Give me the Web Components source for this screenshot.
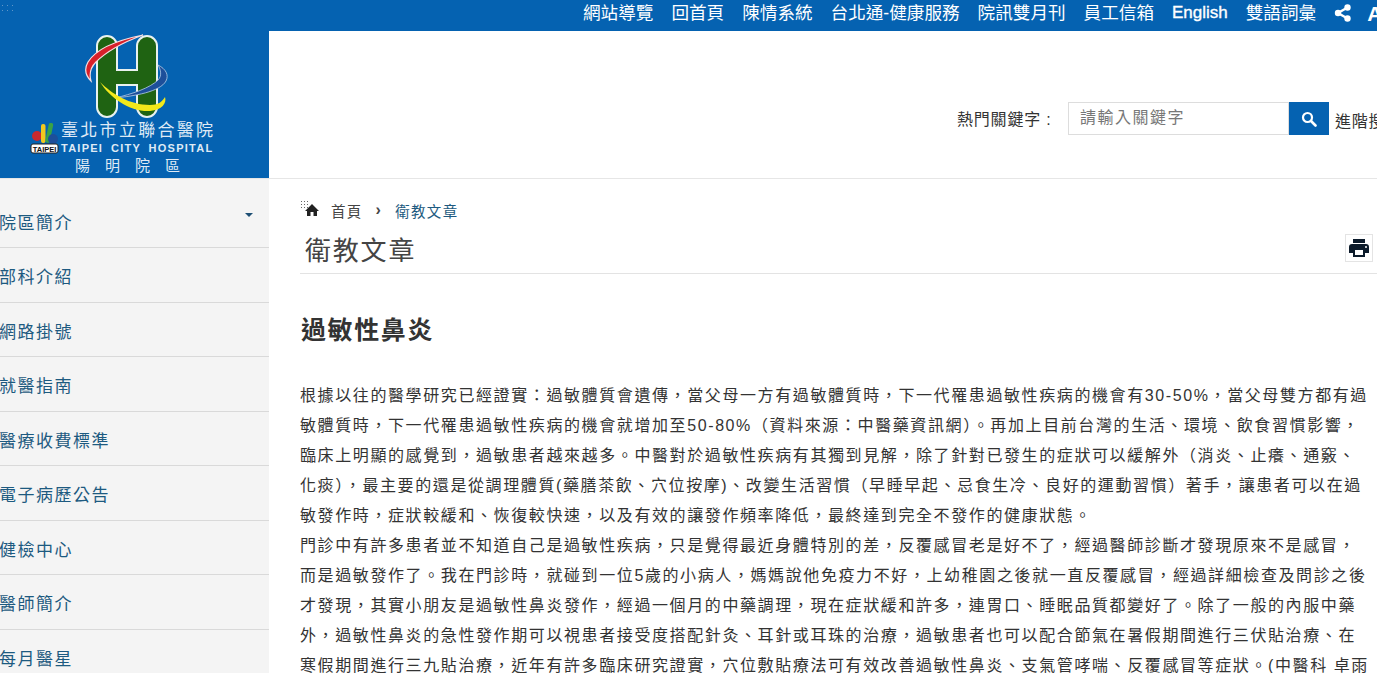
<!DOCTYPE html>
<html lang="zh-Hant">
<head>
<meta charset="utf-8">
<title>過敏性鼻炎</title>
<style>
  html, body { margin: 0; padding: 0; height: 673px; overflow: hidden; background: #fff; }
  body { font-family: "Liberation Sans", "Noto Sans CJK TC", sans-serif; color: #333; }
</style>
</head>
<body>
<page-shell>
  <top-bar slot="top">
    <a>網站導覽</a><a>回首頁</a><a>陳情系統</a><a>台北通-健康服務</a><a>院訊雙月刊</a><a>員工信箱</a><a class="en">English</a><a>雙語詞彙</a>
  </top-bar>
  <hospital-logo slot="logo"></hospital-logo>
  <search-box slot="search"></search-box>
  <side-menu slot="side">
    <menu-item open>院區簡介</menu-item>
    <menu-item>部科介紹</menu-item>
    <menu-item>網路掛號</menu-item>
    <menu-item>就醫指南</menu-item>
    <menu-item>醫療收費標準</menu-item>
    <menu-item>電子病歷公告</menu-item>
    <menu-item>健檢中心</menu-item>
    <menu-item>醫師簡介</menu-item>
    <menu-item>每月醫星</menu-item>
  </side-menu>
  <article-view slot="main" heading="衛教文章" subject="過敏性鼻炎">
    <p>根據以往的醫學研究已經證實&#xFF1A;過敏體質會遺傳&#xFF0C;當父母一方有過敏體質時&#xFF0C;下一代罹患過敏性疾病的機會有30-50%&#xFF0C;當父母雙方都有過敏體質時&#xFF0C;下一代罹患過敏性疾病的機會就增加至50-80%&#xFF08;資料來源&#xFF1A;中醫藥資訊網&#xFF09;。再加上目前台灣的生活、環境、飲食習慣影響&#xFF0C;臨床上明顯的感覺到&#xFF0C;過敏患者越來越多。中醫對於過敏性疾病有其獨到見解&#xFF0C;除了針對已發生的症狀可以緩解外&#xFF08;消炎、止癢、通竅、化痰&#xFF09;&#xFF0C;最主要的還是從調理體質(藥膳茶飲、穴位按摩)、改變生活習慣&#xFF08;早睡早起、忌食生冷、良好的運動習慣&#xFF09;著手&#xFF0C;讓患者可以在過敏發作時&#xFF0C;症狀較緩和、恢復較快速&#xFF0C;以及有效的讓發作頻率降低&#xFF0C;最終達到完全不發作的健康狀態。</p>
    <p>門診中有許多患者並不知道自己是過敏性疾病&#xFF0C;只是覺得最近身體特別的差&#xFF0C;反覆感冒老是好不了&#xFF0C;經過醫師診斷才發現原來不是感冒&#xFF0C;而是過敏發作了。我在門診時&#xFF0C;就碰到一位5歲的小病人&#xFF0C;媽媽說他免疫力不好&#xFF0C;上幼稚園之後就一直反覆感冒&#xFF0C;經過詳細檢查及問診之後才發現&#xFF0C;其實小朋友是過敏性鼻炎發作&#xFF0C;經過一個月的中藥調理&#xFF0C;現在症狀緩和許多&#xFF0C;連胃口、睡眠品質都變好了。除了一般的內服中藥外&#xFF0C;過敏性鼻炎的急性發作期可以視患者接受度搭配針灸、耳針或耳珠的治療&#xFF0C;過敏患者也可以配合節氣在暑假期間進行三伏貼治療、在寒假期間進行三九貼治療&#xFF0C;近年有許多臨床研究證實&#xFF0C;穴位敷貼療法可有效改善過敏性鼻炎、支氣管哮喘、反覆感冒等症狀。(中醫科 卓雨青醫師)</p>
  </article-view>
</page-shell>

<script>
class PageShell extends HTMLElement {
  connectedCallback() {
    this.attachShadow({ mode: 'open' });
    this.shadowRoot.innerHTML = `
      <style>
        :host { display: block; width: 1377px; height: 673px; overflow: hidden; }
        .head { display: flex; height: 147px; border-bottom: 1px solid #e6e6e6; }
        .body { display: flex; }
        .left { width: 269px; flex: none; }
        .right { flex: 1; min-width: 0; }
      </style>
      <slot name="top"></slot>
      <div class="head">
        <div class="left"><slot name="logo"></slot></div>
        <div class="right"><slot name="search"></slot></div>
      </div>
      <div class="body">
        <div class="left"><slot name="side"></slot></div>
        <div class="right"><slot name="main"></slot></div>
      </div>
    `;
  }
}
customElements.define('page-shell', PageShell);

class TopBar extends HTMLElement {
  connectedCallback() {
    this.attachShadow({ mode: 'open' });
    this.shadowRoot.innerHTML = `
      <style>
        :host { display: flex; height: 31px; background: #0562b1; color: #fff; align-items: center; padding-left: 583px; gap: 18px; white-space: nowrap; font-size: 17.6px; position: relative; overflow: hidden; }
        ::slotted(a) { color: #fff; line-height: 26px; margin-top: -5px; }
        ::slotted(a.en) { font-size: 17px; -webkit-text-stroke: .35px #fff; }
        .share { flex: none; margin-top: -5px; }
        .a { font-weight: 700; font-size: 21px; margin-top: -4px; margin-left: -3px; }
        .dots { position: absolute; left: 0; top: 3px; width: 13px; height: 10px; background-image: radial-gradient(circle, #5f97c9 0.8px, transparent 1px); background-size: 5px 5px; }
      </style>
      <span class="dots"></span>
      <slot></slot>
      <svg class="share" width="18" height="18" viewBox="0 0 18 18"><circle cx="13.5" cy="3.500" r="3.200" fill="#fff"/><circle cx="4" cy="9" r="3.200" fill="#fff"/><circle cx="13.500" cy="14.500" r="3.200" fill="#fff"/><path d="M13.500 3.500 4 9l9.500 5.500" fill="none" stroke="#fff" stroke-width="2.400"/></svg>
      <span class="a">A</span>
    `;
  }
}
customElements.define('top-bar', TopBar);

class HospitalLogo extends HTMLElement {
  connectedCallback() {
    this.attachShadow({ mode: 'open' });
    this.shadowRoot.innerHTML = `
      <style>
        :host { display: flex; flex-direction: column; height: 147px; background: #0562b1; color: #dfeaf5; overflow: hidden; padding-left: 30px; box-sizing: border-box; }
        svg.h { display: block; margin: 3px 0 0 52px; flex: none; }
        .names { display: grid; grid-template-columns: 31px auto; justify-content: start; }
        .mark { grid-row: 1 / 3; align-self: end; }
        .zh { font-size: 17px; line-height: 20px; letter-spacing: 2.300px; white-space: nowrap; margin-top: 1px; }
        .en { font-size: 11px; line-height: 14px; font-weight: 700; letter-spacing: 1.250px; word-spacing: 3.500px; white-space: nowrap; }
        .branch { font-family: "Noto Sans CJK TC", sans-serif; font-size: 15px; line-height: 20px; letter-spacing: 15px; margin-left: 45px; white-space: nowrap; }
      </style>
      <svg class="h" width="92" height="86" viewBox="0 0 92 86">
        <path d="M15 12a10 10 0 0 1 20 0V36H55V12a10 10 0 0 1 20 0V73a10 10 0 0 1-20 0V51H35V73a10 10 0 0 1-20 0z" fill="#1f6312" stroke="#e9f1ee" stroke-width="2"/>
        <path d="M61 1C36 6 14 15 6 28 2 35 4 42 9 47 7 40 8 34 14 28 24 18 42 8 61 1z" fill="#d8202a" stroke="#f3dfe2" stroke-width="1.200"/>
        <path d="M76 31C84 35 87 41 84 47 78 58 52 62 33 64 50 60 68 54 76 46 80 42 79 36 76 31z" fill="#1d4f9a" stroke="#b5cde6" stroke-width=".8"/>
        <path d="M18 48C30 60 48 71 68 71 76 71 80 68 83 63 85 69 80 76 68 77 48 78 28 64 18 48z" fill="#f3e81a"/>
      </svg>
      <div class="names">
        <svg class="mark" width="30" height="32" viewBox="0 0 30 32">
          <circle cx="7" cy="13" r="5" fill="#c9292e"/><rect x="11" y="1" width="4.500" height="19" rx="2" fill="#f2c81e"/><rect x="17" y="0" width="4.500" height="20" rx="2" fill="#3aa345" transform="rotate(12 20 10)"/><circle cx="23" cy="16" r="5" fill="#1d4f9a"/>
          <rect x="1" y="21" width="27" height="9" rx="2" fill="#fff" stroke="#222"/>
          <text x="14.500" y="28.500" font-family="Liberation Sans" font-size="7.500" font-weight="700" text-anchor="middle" fill="#111">TAIPEI</text>
        </svg>
        <div class="zh">臺北市立聯合醫院</div>
        <div class="en">TAIPEI CITY HOSPITAL</div>
      </div>
      <div class="branch">陽明院區</div>
    `;
  }
}
customElements.define('hospital-logo', HospitalLogo);

class SearchBox extends HTMLElement {
  connectedCallback() {
    this.attachShadow({ mode: 'open' });
    this.shadowRoot.innerHTML = `
      <style>
        :host { display: flex; align-items: center; height: 147px; padding: 0 0 0 688px; box-sizing: border-box; white-space: nowrap; overflow: hidden; font-size: 16px; letter-spacing: .8px; color: #333; }
        .row { display: flex; align-items: center; margin-top: 28px; }
        .lbl { width: 101px; margin-top: -2px; }
        .field { width: 221px; height: 33px; box-sizing: border-box; border: 1px solid #ddd; padding-left: 11px; line-height: 29px; color: #777; margin-left: 10px; letter-spacing: 1.500px; }
        button { width: 40px; height: 33px; border: 0; padding: 0; background: #0562b1; display: flex; align-items: center; justify-content: center; }
        .adv { margin-left: 6px; margin-top: 2px; }
      </style>
      <div class="row">
        <span class="lbl">熱門關鍵字 :</span>
        <div class="field">請輸入關鍵字</div>
        <button><svg width="16" height="16" viewBox="0 0 16 16"><circle cx="6.500" cy="6.500" r="4.500" fill="none" stroke="#fff" stroke-width="2.200"/><path d="m10 10 4.500 4.500" stroke="#fff" stroke-width="2.600" stroke-linecap="round"/></svg></button>
        <span class="adv">進階搜尋</span>
      </div>
    `;
  }
}
customElements.define('search-box', SearchBox);

class SideMenu extends HTMLElement {
  connectedCallback() {
    this.attachShadow({ mode: 'open' });
    this.shadowRoot.innerHTML = `
      <style>
        :host { display: block; background: #f4f4f4; height: 495px; padding-top: 14.500px; box-sizing: border-box; }
      </style>
      <slot></slot>
    `;
  }
}
customElements.define('side-menu', SideMenu);

class MenuItem extends HTMLElement {
  connectedCallback() {
    this.attachShadow({ mode: 'open' });
    this.shadowRoot.innerHTML = `
      <style>
        :host { display: flex; align-items: center; justify-content: space-between; height: 53.500px; border-bottom: 1px solid #d9d9d9; padding-right: 16px; font-size: 17px; letter-spacing: 1.500px; color: #1d5a80; position: relative; }
        span { margin-left: -1px; margin-top: 2px; }
        i { width: 0; height: 0; border: 4px solid transparent; border-top: 4px solid #1d4f74; border-bottom: 0; margin-top: -10px; }
      </style>
      <span><slot></slot></span>
      ${this.hasAttribute('open') ? '<i></i>' : ''}
    `;
  }
}
customElements.define('menu-item', MenuItem);

class ArticleView extends HTMLElement {
  connectedCallback() {
    this.attachShadow({ mode: 'open' });
    this.shadowRoot.innerHTML = `
      <style>
        :host { display: block; padding: 20px 0 0 31px; }
        nav { display: flex; align-items: center; height: 24px; font-size: 14.500px; letter-spacing: 1.300px; color: #444; white-space: nowrap; position: relative; margin-top: -1px; }
        nav svg { margin-right: 11px; }
        nav b { font-weight: 700; margin: 0 13px; font-size: 16px; }
        nav em { font-style: normal; color: #1d5a80; }
        .dots { position: absolute; left: 0; top: 2px; width: 8px; height: 8px; background-image: radial-gradient(circle, #666 .7px, transparent 1px); background-size: 3px 3px; }
        .title { display: flex; justify-content: space-between; align-items: center; border-bottom: 1px solid #e3e3e3; height: 52px; padding: 2px 4px 0 5px; box-sizing: border-box; }
        h2 { margin: 0; font-weight: 400; font-size: 26px; letter-spacing: 1.800px; color: #444; }
        .print { width: 28px; height: 28px; box-sizing: border-box; border: 1px solid #e4e4e4; display: flex; align-items: center; justify-content: center; margin-top: -2px; }
        h1 { margin: 39px 0 0 1px; font-size: 25px; line-height: 34px; letter-spacing: 1.600px; color: #333; }
        .text { margin-top: 34px; font-size: 16px; line-height: 30px; letter-spacing: 1.600px; width: 1072px; color: #333; }
        ::slotted(p) { margin: 0; }
      </style>
      <nav>
        <span class="dots"></span>
        <svg width="20" height="16" viewBox="0 0 20 16"><path d="M12 2 5 9h2v5h3.500v-4h3v4H17V9h2z" fill="#222"/></svg>
        <span>首頁</span><b>›</b><em>${this.getAttribute('heading')}</em>
      </nav>
      <div class="title">
        <h2>${this.getAttribute('heading')}</h2>
        <div class="print"><svg width="24" height="24" viewBox="0 0 24 24"><path d="M19 8H5a3 3 0 0 0-3 3v6h4v4h12v-4h4v-6a3 3 0 0 0-3-3zm-3 11H8v-5h8zm3-7a1 1 0 1 1 0-2 1 1 0 0 1 0 2zM18 3H6v4h12z" fill="#0b1a2a"/></svg></div>
      </div>
      <h1>${this.getAttribute('subject')}</h1>
      <div class="text"><slot></slot></div>
    `;
  }
}
customElements.define('article-view', ArticleView);
</script>
</body>
</html>
